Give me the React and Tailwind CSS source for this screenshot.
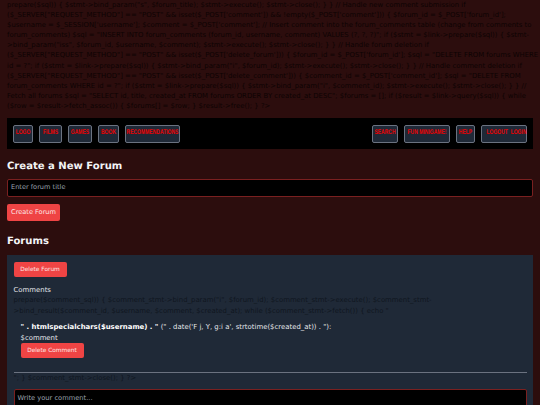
const DEJAVU = 'font-["DejaVu_Sans",sans-serif]'

const phpLines = [
  `prepare($sql)) { $stmt->bind_param("s", $forum_title); $stmt->execute(); $stmt->close(); } } // Handle new comment submission if`,
  `($_SERVER["REQUEST_METHOD"] == "POST" && isset($_POST['comment']) && !empty($_POST['comment'])) { $forum_id = $_POST['forum_id'];`,
  `$username = $_SESSION['username']; $comment = $_POST['comment']; // Insert comment into the forum_comments table (change from comments to`,
  `forum_comments) $sql = "INSERT INTO forum_comments (forum_id, username, comment) VALUES (?, ?, ?)"; if ($stmt = $link->prepare($sql)) { $stmt-`,
  `>bind_param("iss", $forum_id, $username, $comment); $stmt->execute(); $stmt->close(); } } // Handle forum deletion if`,
  `($_SERVER["REQUEST_METHOD"] == "POST" && isset($_POST['delete_forum'])) { $forum_id = $_POST['forum_id']; $sql = "DELETE FROM forums WHERE`,
  `id = ?"; if ($stmt = $link->prepare($sql)) { $stmt->bind_param("i", $forum_id); $stmt->execute(); $stmt->close(); } } // Handle comment deletion if`,
  `($_SERVER["REQUEST_METHOD"] == "POST" && isset($_POST['delete_comment'])) { $comment_id = $_POST['comment_id']; $sql = "DELETE FROM`,
  `forum_comments WHERE id = ?"; if ($stmt = $link->prepare($sql)) { $stmt->bind_param("i", $comment_id); $stmt->execute(); $stmt->close(); } } //`,
  `Fetch all forums $sql = "SELECT id, title, created_at FROM forums ORDER BY created_at DESC"; $forums = []; if ($result = $link->query($sql)) { while`,
  `($row = $result->fetch_assoc()) { $forums[] = $row; } $result->free(); } ?>`,
]

function NavLink({ children, className = '' }) {
  return (
    <a className={`flex h-[18px] items-center justify-center rounded-[2px] border border-[#6b7280] bg-[#1f2937] font-["Liberation_Sans",sans-serif] text-[5px] font-bold whitespace-nowrap text-[#f00000] ${className}`}>
      <span className="inline-block scale-y-[1.35]">{children}</span>
    </a>
  )
}

function RedButton({ children, className = '' }) {
  return (
    <button className={`flex items-center justify-center rounded-[2px] bg-[#ef4444] text-[#fde8e8] ${className}`}>
      {children}
    </button>
  )
}

export default function App() {
  return (
    <div className={`h-[405px] w-[540px] overflow-hidden bg-[#2c0d0d] px-[7px] text-[#e5e7eb] [text-rendering:geometricPrecision] ${DEJAVU}`}>
      <div className="flex h-[118px] flex-col text-[6.92px] leading-[10.1px] text-[#0c0303]">
        {phpLines.map((line) => (
          <div key={line} className="whitespace-nowrap">{line}</div>
        ))}
      </div>

      <nav className="flex h-[31px] w-[526px] items-center justify-between bg-black px-[6px]">
        <div className="flex gap-[6px]">
          <NavLink className="w-[20px]">LOGO</NavLink>
          <NavLink className="w-[23px]">FILMS</NavLink>
          <NavLink className="w-[24px]">GAMES</NavLink>
          <NavLink className="w-[21px]">BOOK</NavLink>
          <NavLink className="w-[55px]">RECOMMENDATIONS</NavLink>
        </div>
        <div className="flex gap-[6px]">
          <NavLink className="w-[26px]">SEARCH</NavLink>
          <NavLink className="w-[46px]">FUN MINIGAME!</NavLink>
          <NavLink className="w-[19px]">HELP</NavLink>
          <NavLink className="w-[46px] pl-[5px]">LOGOUT&nbsp; LOGIN</NavLink>
        </div>
      </nav>

      <h2 className="mt-[12px] text-[10.06px] leading-[12px] font-bold text-[#f3f4f6]">Create a New Forum</h2>
      <div className="mt-[6px] flex h-[18px] w-[526px] items-center rounded-[2px] border border-[#7a2020] bg-black px-[3px] text-[6.6px] text-[#9ca3af]">
        Enter forum title
      </div>
      <RedButton className="mt-[7px] h-[17px] w-[53px] text-[6.6px]">Create Forum</RedButton>

      <h2 className="mt-[15px] text-[10.06px] leading-[12px] font-bold text-[#f3f4f6]">Forums</h2>

      <section className="mt-[7px] h-[150px] w-[526px] overflow-hidden bg-[#1f2937] px-[6.5px] pt-[7px]">
        <RedButton className="h-[15px] w-[53px] text-[5.85px]">Delete Forum</RedButton>
        <div className="mt-[8px] text-[6.92px] leading-[10.3px] text-[#e5e7eb]">Comments</div>
        <div className="text-[6.92px] leading-[10.3px] whitespace-nowrap text-[#0f1620]">
          <div>{`prepare($comment_sql)) { $comment_stmt->bind_param("i", $forum_id); $comment_stmt->execute(); $comment_stmt-`}</div>
          <div>{`>bind_result($comment_id, $username, $comment, $created_at); while ($comment_stmt->fetch()) { echo "`}</div>
        </div>
        <div className="mt-[6.6px] pl-[7px] text-[6.92px] leading-[10.3px] text-[#e5e7eb]">
          <div className="whitespace-nowrap">
            <span className="font-bold text-white">{`" . htmlspecialchars($username) . "`}</span>
            {` (" . date('F j, Y, g:i a', strtotime($created_at)) . "):`}
          </div>
          <div>$comment</div>
          <RedButton className="h-[15px] w-[63px] text-[5.85px]">Delete Comment</RedButton>
        </div>
        <hr className="mt-[14px] border-t border-[#6b7280]" />
        <div className="text-[6.92px] leading-[10.3px] text-[#0f1620]">{`"; } $comment_stmt->close(); } ?>`}</div>
        <div className="mt-[6px] flex h-[30px] items-start rounded-[2px] border border-[#7a2020] bg-black px-[3px] pt-[3px] text-[6.7px] text-[#9ca3af]">
          Write your comment...
        </div>
      </section>
    </div>
  )
}
